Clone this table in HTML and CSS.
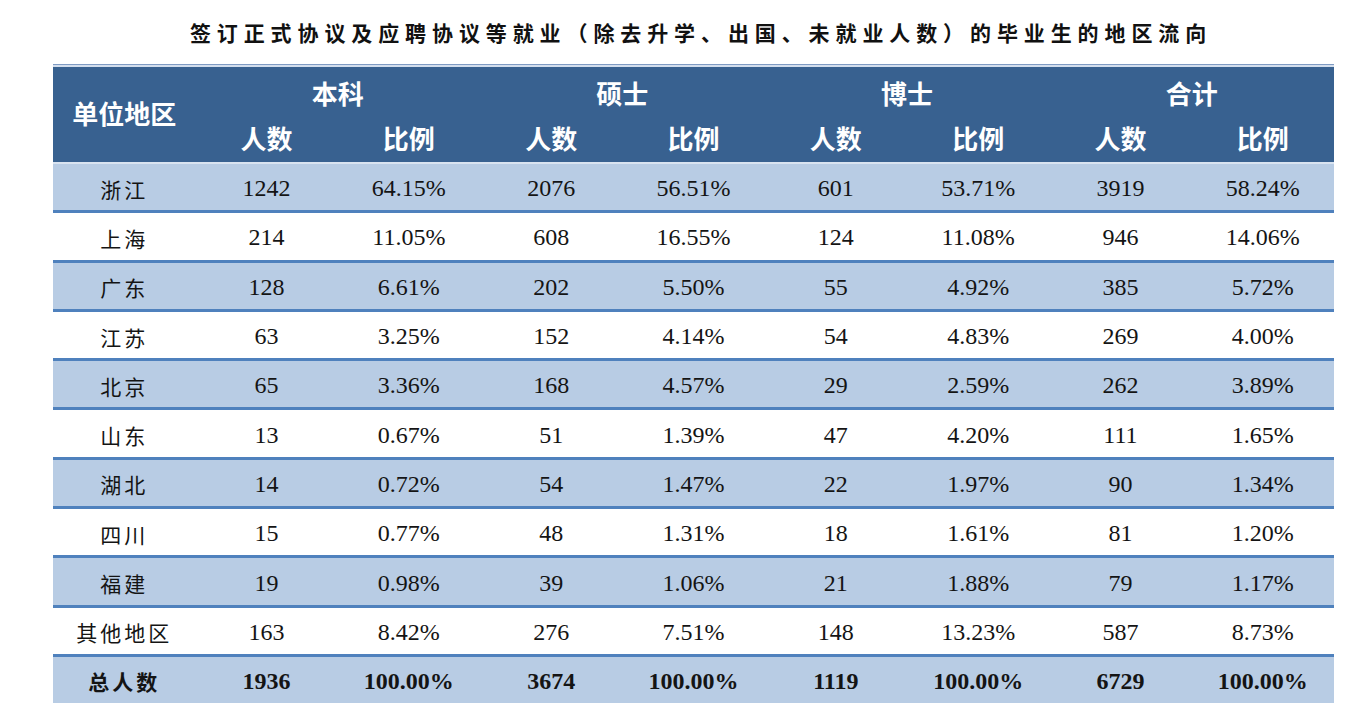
FILE: index.html
```html
<!DOCTYPE html>
<html lang="zh">
<head>
<meta charset="utf-8">
<title>地区流向</title>
<link rel="stylesheet" href="styles.css">
</head>
<body>
<h1 class="title">签订正式协议及应聘协议等就业（除去升学、出国、未就业人数）的毕业生的地区流向</h1>
<div class="wrap">
<table class="grid">
<thead>
<tr class="h1">
<th rowspan="2" class="hlabel">单位地区</th>
<th colspan="2">本科</th>
<th colspan="2">硕士</th>
<th colspan="2">博士</th>
<th colspan="2">合计</th>
</tr>
<tr class="h2">
<th>人数</th><th>比例</th><th>人数</th><th>比例</th><th>人数</th><th>比例</th><th>人数</th><th>比例</th>
</tr>
</thead>
<tbody>
<tr class="alt"><td class="cn">浙江</td><td>1242</td><td>64.15%</td><td>2076</td><td>56.51%</td><td>601</td><td>53.71%</td><td>3919</td><td>58.24%</td></tr>
<tr><td class="cn">上海</td><td>214</td><td>11.05%</td><td>608</td><td>16.55%</td><td>124</td><td>11.08%</td><td>946</td><td>14.06%</td></tr>
<tr class="alt"><td class="cn">广东</td><td>128</td><td>6.61%</td><td>202</td><td>5.50%</td><td>55</td><td>4.92%</td><td>385</td><td>5.72%</td></tr>
<tr><td class="cn">江苏</td><td>63</td><td>3.25%</td><td>152</td><td>4.14%</td><td>54</td><td>4.83%</td><td>269</td><td>4.00%</td></tr>
<tr class="alt"><td class="cn">北京</td><td>65</td><td>3.36%</td><td>168</td><td>4.57%</td><td>29</td><td>2.59%</td><td>262</td><td>3.89%</td></tr>
<tr><td class="cn">山东</td><td>13</td><td>0.67%</td><td>51</td><td>1.39%</td><td>47</td><td>4.20%</td><td>111</td><td>1.65%</td></tr>
<tr class="alt"><td class="cn">湖北</td><td>14</td><td>0.72%</td><td>54</td><td>1.47%</td><td>22</td><td>1.97%</td><td>90</td><td>1.34%</td></tr>
<tr><td class="cn">四川</td><td>15</td><td>0.77%</td><td>48</td><td>1.31%</td><td>18</td><td>1.61%</td><td>81</td><td>1.20%</td></tr>
<tr class="alt"><td class="cn">福建</td><td>19</td><td>0.98%</td><td>39</td><td>1.06%</td><td>21</td><td>1.88%</td><td>79</td><td>1.17%</td></tr>
<tr><td class="cn">其他地区</td><td>163</td><td>8.42%</td><td>276</td><td>7.51%</td><td>148</td><td>13.23%</td><td>587</td><td>8.73%</td></tr>
<tr class="alt total"><td class="cn">总人数</td><td>1936</td><td>100.00%</td><td>3674</td><td>100.00%</td><td>1119</td><td>100.00%</td><td>6729</td><td>100.00%</td></tr>
</tbody>
</table>
</div>
</body>
</html>
```
FILE: styles.css
```css
html, body {
  margin: 0;
  padding: 0;
  background: #ffffff;
}
.title {
  margin: 0;
  height: 64px;
  line-height: 64px;
  padding-left: 36px;
  text-align: center;
  font-family: "Noto Sans CJK SC", sans-serif;
  font-weight: 700;
  font-size: 21px;
  letter-spacing: 5.9px;
  color: #111111;
}
.wrap {
  margin-left: 53px;
  width: 1281px;
  border-top: 1px solid #7f9bc3;
}
.grid {
  width: 100%;
  border-collapse: collapse;
  table-layout: fixed;
}
.grid th {
  background: #386190;
  color: #ffffff;
  font-family: "Noto Sans CJK SC", sans-serif;
  font-weight: 700;
  font-size: 26px;
  padding: 0;
  text-align: center;
}
.h1 th {
  border-top: 2px solid #d3deed;
  height: 48px;
  padding-top: 1px;
}
.h2 th {
  height: 42px;
  padding-bottom: 4px;
  border-bottom: 2px solid #d9e3f0;
}
.grid th.hlabel {
  padding-top: 0;
  padding-bottom: 4px;
  border-bottom: 2px solid #d9e3f0;
}
.grid td {
  height: 43.3px;
  padding: 3px 0 0 0;
  text-align: center;
  font-family: "Liberation Serif", "Noto Sans CJK SC", serif;
  font-size: 24px;
  color: #141414;
  border-bottom: 3px solid #4f81bd;
  background: #ffffff;
}
.grid tr.alt td {
  background: #b8cce4;
}
.grid td.cn {
  font-family: "Noto Sans CJK SC", sans-serif;
  font-size: 21px;
  letter-spacing: 3px;
  font-weight: 400;
}
.grid tr.total td {
  border-bottom: none;
  height: 43px;
  font-weight: 700;
}
.grid tr.total td.cn {
  font-weight: 700;
}
```
